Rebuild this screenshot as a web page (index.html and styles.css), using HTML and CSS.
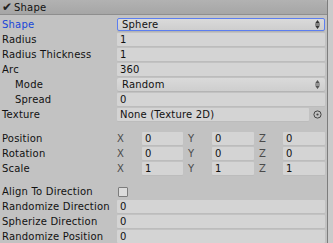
FILE: index.html
```html
<!DOCTYPE html>
<html lang="en">
<head>
    <meta charset="UTF-8">
    <link rel="stylesheet" href="styles.css">
</head>
<body>
    <div class="inspector">
        <div class="header">
            <span class="check">&#10004;</span>
            <span>Shape</span>
        </div>
        <div class="content">
            <div class="row">
                <div class="label active">Shape</div>
                <div class="popup focused"><span>Sphere</span>
                    <svg class="arrows" width="5" height="9" viewBox="0 0 5 9"><path d="M2.5 0 L5 3.5 L0 3.5 Z M0 4.2 H5 V4.8 H0 Z M0 5.5 L5 5.5 L2.5 9 Z" fill="#333"/></svg>
                </div>
            </div>
            <div class="row">
                <div class="label">Radius</div>
                <div class="field">1</div>
            </div>
            <div class="row">
                <div class="label">Radius Thickness</div>
                <div class="field">1</div>
            </div>
            <div class="row">
                <div class="label">Arc</div>
                <div class="field">360</div>
            </div>
            <div class="row">
                <div class="label sub">Mode</div>
                <div class="popup"><span>Random</span>
                    <svg class="arrows" width="5" height="9" viewBox="0 0 5 9"><path d="M2.5 0 L5 3.5 L0 3.5 Z M0 4.2 H5 V4.8 H0 Z M0 5.5 L5 5.5 L2.5 9 Z" fill="#555"/></svg>
                </div>
            </div>
            <div class="row">
                <div class="label sub">Spread</div>
                <div class="field">0</div>
            </div>
            <div class="row">
                <div class="label">Texture</div>
                <div class="object">
                    <div class="field">None (Texture 2D)</div>
                    <svg class="picker" width="9" height="9" viewBox="0 0 9 9"><circle cx="4.5" cy="4.5" r="3.6" fill="none" stroke="#444" stroke-width="1"/><circle cx="4.5" cy="4.5" r="1.1" fill="#444"/></svg>
                </div>
            </div>

            <div class="group">
                <div class="row">
                    <div class="label">Position</div>
                    <div class="vector">
                        <div class="axis"><span>X</span><div class="field">0</div></div>
                        <div class="axis"><span>Y</span><div class="field">0</div></div>
                        <div class="axis"><span>Z</span><div class="field">0</div></div>
                    </div>
                </div>
                <div class="row">
                    <div class="label">Rotation</div>
                    <div class="vector">
                        <div class="axis"><span>X</span><div class="field">0</div></div>
                        <div class="axis"><span>Y</span><div class="field">0</div></div>
                        <div class="axis"><span>Z</span><div class="field">0</div></div>
                    </div>
                </div>
                <div class="row">
                    <div class="label">Scale</div>
                    <div class="vector">
                        <div class="axis"><span>X</span><div class="field">1</div></div>
                        <div class="axis"><span>Y</span><div class="field">1</div></div>
                        <div class="axis"><span>Z</span><div class="field">1</div></div>
                    </div>
                </div>
            </div>

            <div class="group">
                <div class="row">
                    <div class="label">Align To Direction</div>
                    <div class="checkbox"></div>
                </div>
                <div class="row">
                    <div class="label">Randomize Direction</div>
                    <div class="field">0</div>
                </div>
                <div class="row">
                    <div class="label">Spherize Direction</div>
                    <div class="field">0</div>
                </div>
                <div class="row">
                    <div class="label">Randomize Position</div>
                    <div class="field">0</div>
                </div>
            </div>
        </div>
    </div>
</body>
</html>
```

FILE: styles.css
```css
body {
    margin: 0;
    background-color: #cbcbcb;
    font-family: "DejaVu Sans", sans-serif;
    font-size: 10px;
    letter-spacing: 0.2px;
    color: #111;
    overflow: hidden;
}
.inspector {
    width: 327px;
    height: 243px;
    background-color: #c2c2c2;
    border-right: 1px solid #7d7d7d;
}
.header {
    height: 14px;
    display: flex;
    align-items: center;
    gap: 2px;
    padding-left: 2px;
    background: linear-gradient(#b2b2b2, #a6a6a6);
    border-bottom: 1px solid #8e8e8e;
    border-top-right-radius: 3px;
}
.header .check {
    font-size: 12px;
    line-height: 12px;
    color: #222;
    width: 10px;
}
.content {
    padding-top: 2px;
}
.group {
    margin-top: 9px;
}
.group + .group {
    margin-top: 8px;
}
.row {
    height: 15px;
    display: flex;
    align-items: center;
}
.label {
    width: 115px;
    padding-left: 2px;
    flex-shrink: 0;
    white-space: nowrap;
}
.label.sub {
    width: 102px;
    padding-left: 15px;
}
.label.active {
    color: #1846d8;
}
.field {
    flex: 1;
    height: 13px;
    line-height: 13px;
    padding-left: 3px;
    margin-right: 2px;
    background-color: #d4d4d4;
    border-radius: 1px;
    box-shadow: 0 1px 0 #bcbcbc;
    white-space: nowrap;
    overflow: hidden;
}
.popup {
    flex: 1;
    height: 13px;
    margin-right: 2px;
    padding: 0 5px;
    display: flex;
    align-items: center;
    justify-content: space-between;
    background: linear-gradient(#dadada, #cecece);
    border-radius: 2px;
    box-sizing: border-box;
    box-shadow: 0 1px 0 #b4b4b4;
}
.popup.focused {
    border: 1px solid #5c7ef0;
    padding: 0 4px;
}
.object {
    flex: 1;
    display: flex;
    align-items: center;
}
.object .field {
    margin-right: 0;
}
.object .picker {
    margin: 0 5px 0 4px;
}
.vector {
    flex: 1;
    display: flex;
    gap: 5px;
    margin-right: 2px;
}
.axis {
    flex: 1;
    display: flex;
    align-items: center;
}
.axis span {
    width: 25px;
    color: #4a4a4a;
}
.axis:not(:first-child) span {
    width: 24px;
}
.axis .field {
    margin-right: 0;
}
.checkbox {
    width: 8px;
    height: 8px;
    margin-left: 1px;
    background-color: #dcdcdc;
    border: 1px solid #7c7c7c;
    border-radius: 1px;
}
```
